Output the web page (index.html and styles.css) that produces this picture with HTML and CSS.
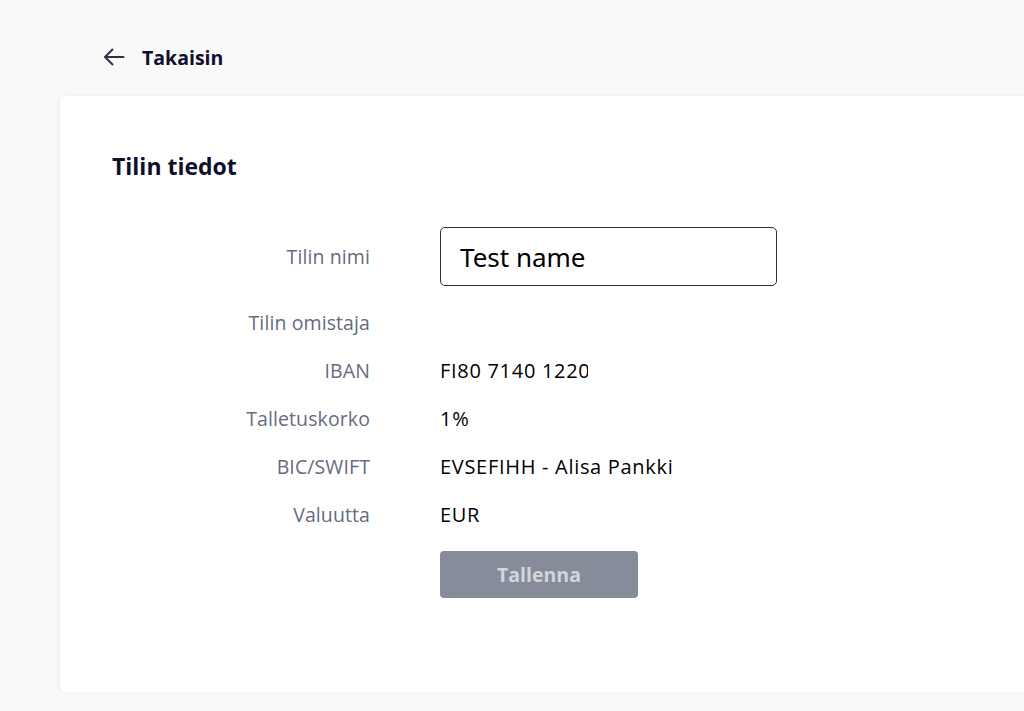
FILE: index.html
```html
<!DOCTYPE html>
<html lang="fi">
<head>
<meta charset="utf-8">
<title>Tilin tiedot</title>
<link rel="stylesheet" href="styles.css">
</head>
<body>
<div class="page">
  <header class="topbar">
    <a class="back" href="#">
      <svg class="back-icon" width="24" height="24" viewBox="0 0 24 24" fill="none" stroke="#2d3340" stroke-width="2" stroke-linecap="round" stroke-linejoin="round"><path d="M21.5 12H3.5"/><path d="M10.5 4.5L3 12l7.5 7.5"/></svg>
      <span>Takaisin</span>
    </a>
  </header>
  <main class="card">
    <h1 class="title">Tilin tiedot</h1>
    <div class="form">
      <div class="label label-first">Tilin nimi</div>
      <div class="value value-first"><div class="input">Test name</div></div>
      <div class="label">Tilin omistaja</div>
      <div class="value"></div>
      <div class="label">IBAN</div>
      <div class="value"><span class="iban">FI80 7140 1220 0012 34</span></div>
      <div class="label">Talletuskorko</div>
      <div class="value">1%</div>
      <div class="label">BIC/SWIFT</div>
      <div class="value">EVSEFIHH - Alisa Pankki</div>
      <div class="label">Valuutta</div>
      <div class="value">EUR</div>
      <div class="label"></div>
      <div class="value value-button"><button class="save" type="button">Tallenna</button></div>
    </div>
  </main>
</div>
</body>
</html>
```

FILE: styles.css
```css
html, body {
  margin: 0;
  padding: 0;
  background: #f9f9f9;
  overflow: hidden;
}
body {
  font-family: "Open Sans", "Noto Sans", "Liberation Sans", sans-serif;
  color: #0f0f2d;
}
.page {
  padding-left: 60px;
  width: 1100px;
}
.topbar {
  height: 96px;
  display: flex;
  align-items: center;
  padding-left: 42px;
  padding-top: 18px;
  box-sizing: border-box;
}
.back {
  display: flex;
  align-items: center;
  gap: 16px;
  text-decoration: none;
  color: #0f0f2d;
  font-weight: 700;
  font-size: 19.5px;
}
.back-icon {
  display: block;
}
.card {
  background: #ffffff;
  border-radius: 5px;
  box-shadow: 0 1px 6px rgba(20, 25, 40, 0.08);
  height: 596px;
  box-sizing: border-box;
  padding-top: 55px;
}
.title {
  margin: 0 0 46px 52px;
  font-size: 23px;
  line-height: 30px;
  font-weight: 700;
  color: #0f0f2d;
}
.form {
  display: grid;
  grid-template-columns: 310px 337px;
  grid-template-rows: 71px;
  grid-auto-rows: 48px;
  column-gap: 70px;
}
.label {
  text-align: right;
  align-self: center;
  font-size: 19.5px;
  color: #666b80;
  letter-spacing: 0.1px;
}
.label-first {
  align-self: start;
  line-height: 59px;
}
.value {
  align-self: center;
  font-size: 20px;
  letter-spacing: 0.7px;
  color: #000000;
}
.value-first,
.value-button {
  align-self: start;
}
.input {
  box-sizing: border-box;
  height: 59px;
  border: 1px solid #2a2f3e;
  border-radius: 5px;
  padding-left: 19px;
  display: flex;
  align-items: center;
  font-family: "Noto Sans", "Liberation Sans", sans-serif;
  font-size: 26px;
  letter-spacing: 0;
  color: #000;
}
.iban {
  display: block;
  width: 148px;
  overflow: hidden;
  white-space: nowrap;
}
.save {
  margin-top: 13px;
  width: 198px;
  height: 47px;
  border: none;
  border-radius: 4px;
  background: #878c9a;
  color: #d3d6dd;
  font-family: "Open Sans", "Noto Sans", sans-serif;
  font-weight: 700;
  font-size: 19.5px;
  letter-spacing: 0;
}
```
